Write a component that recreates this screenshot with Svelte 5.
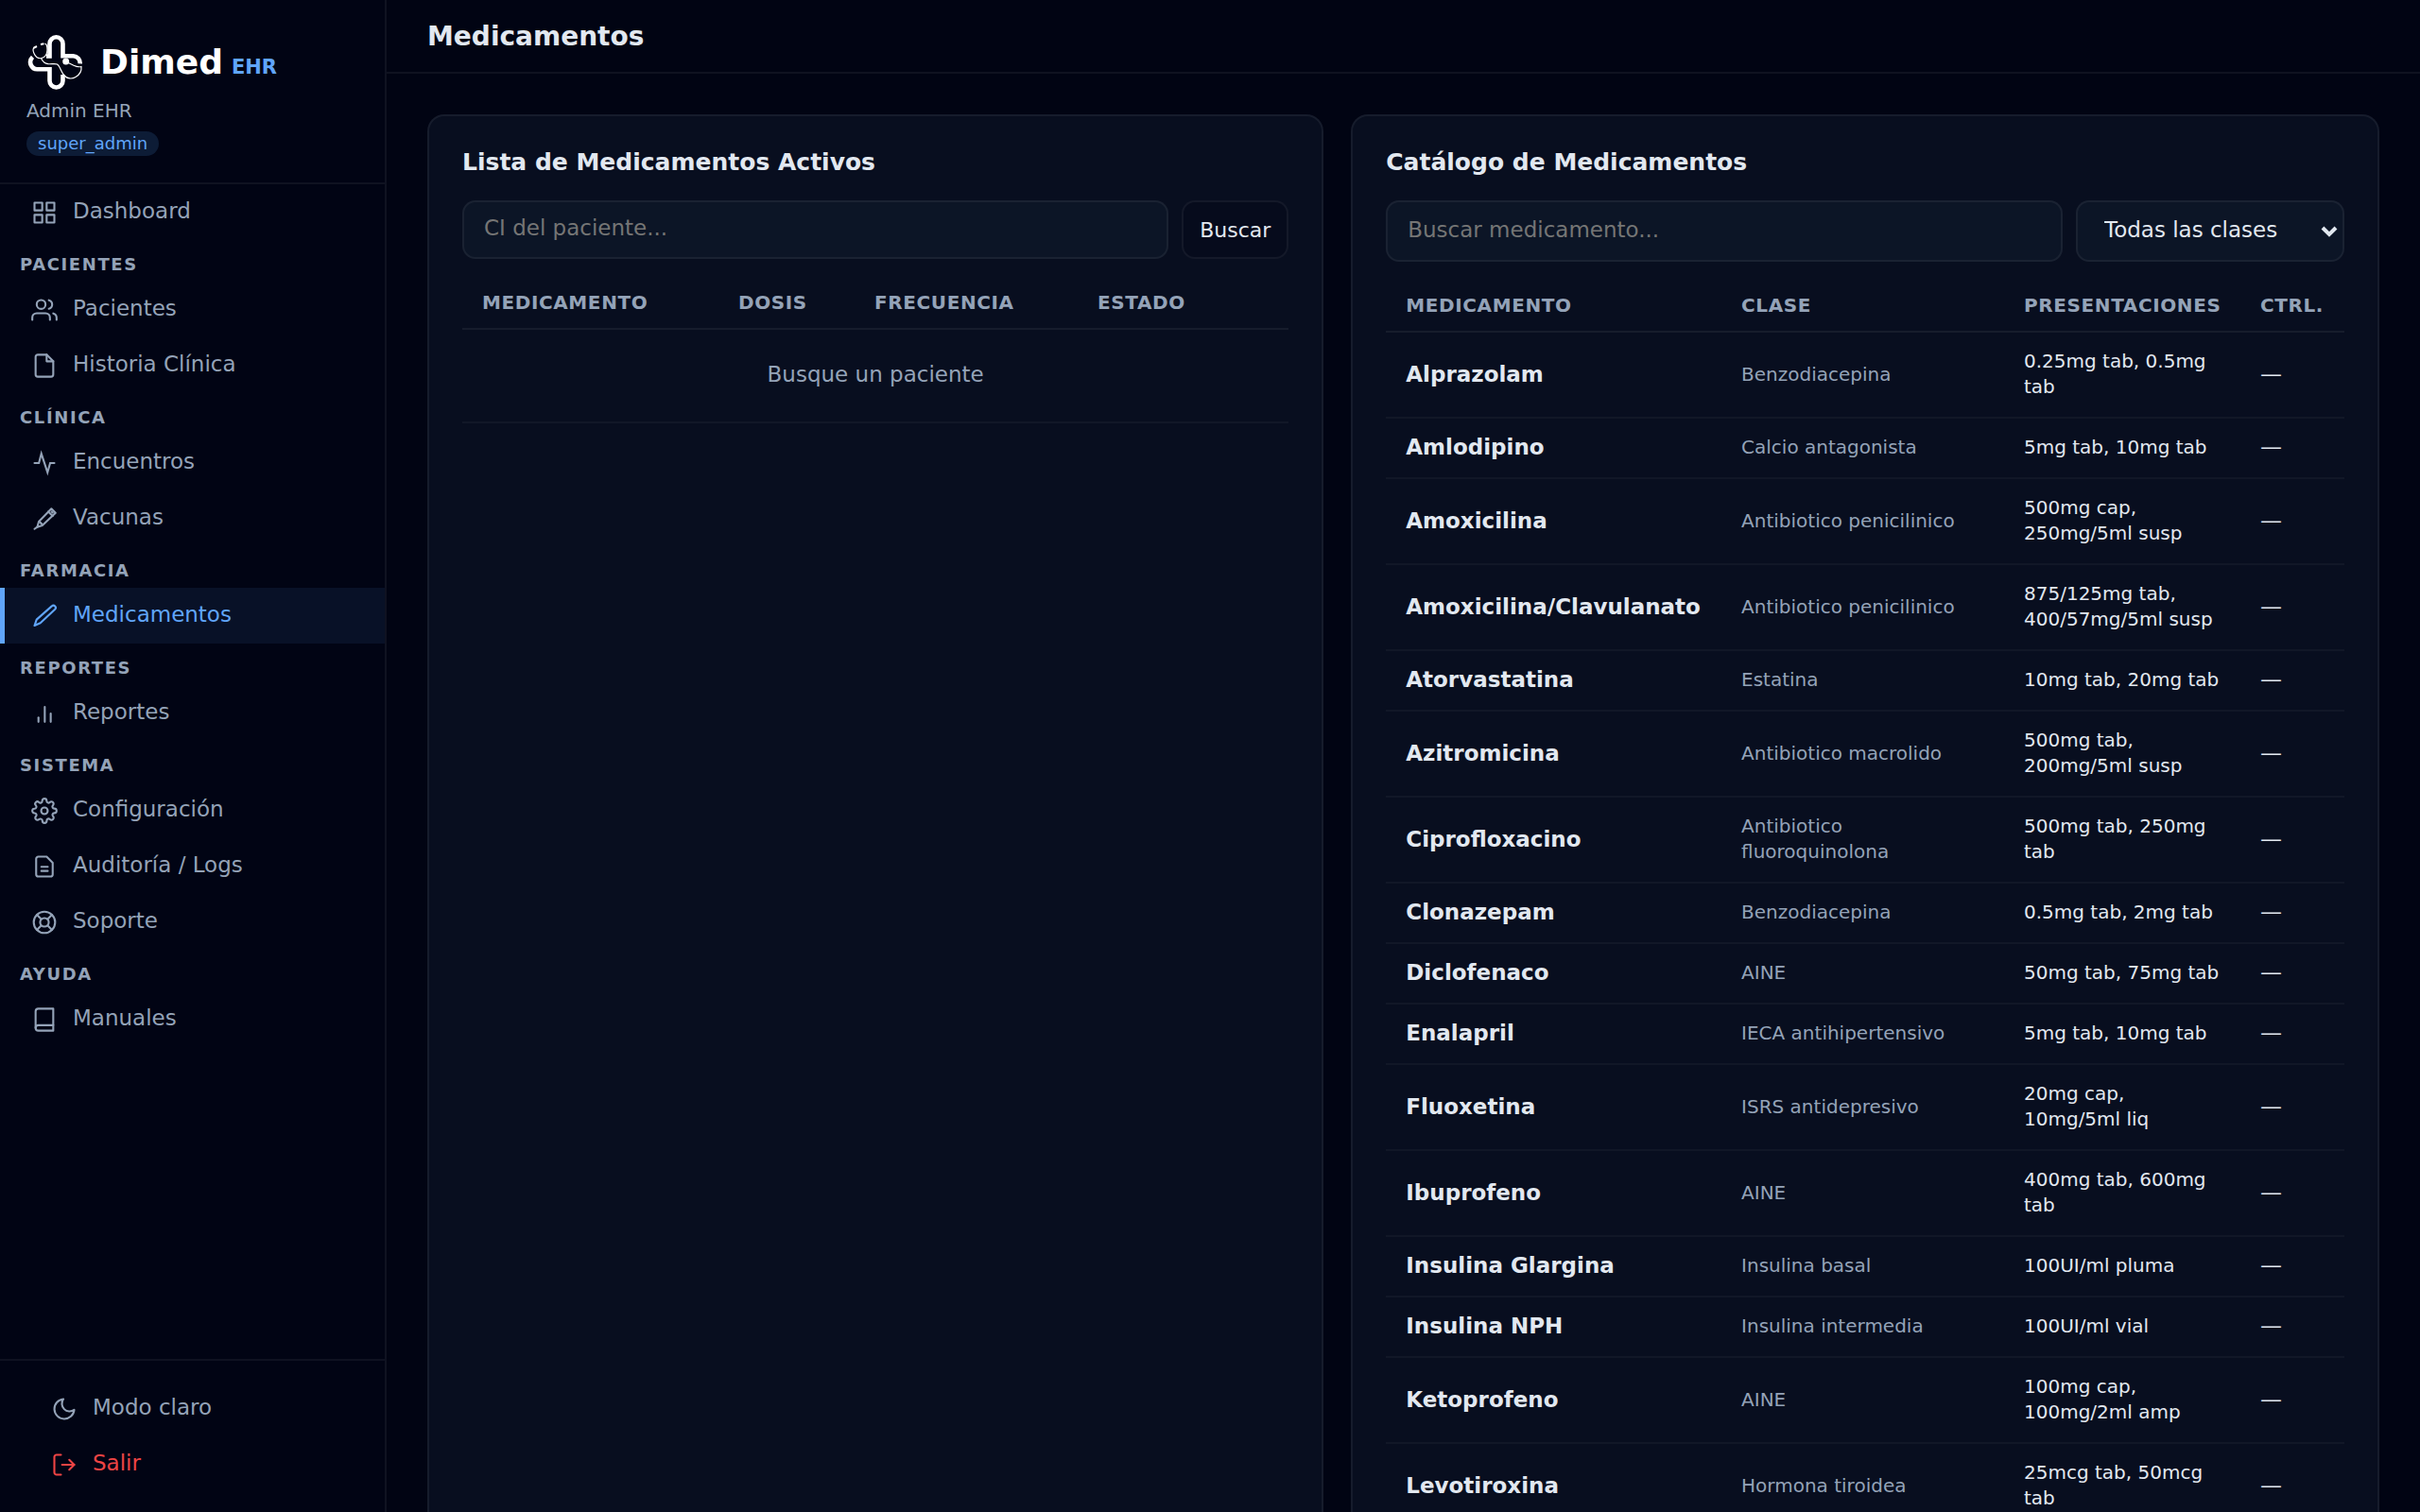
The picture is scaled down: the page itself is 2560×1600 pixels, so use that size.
<script lang="ts">
  interface NavItem {
    id: string;
    label: string;
  }

  interface NavSection {
    title: string;
    items: NavItem[];
  }

  interface Drug {
    name: string;
    clase: string;
    forms: string;
    controlled?: boolean;
  }

  const sections: NavSection[] = [
    { title: '', items: [{ id: 'dashboard', label: 'Dashboard' }] },
    {
      title: 'Pacientes',
      items: [
        { id: 'patients', label: 'Pacientes' },
        { id: 'history', label: 'Historia Clínica' },
      ],
    },
    {
      title: 'Clínica',
      items: [
        { id: 'encounters', label: 'Encuentros' },
        { id: 'vaccines', label: 'Vacunas' },
      ],
    },
    { title: 'Farmacia', items: [{ id: 'meds', label: 'Medicamentos' }] },
    { title: 'Reportes', items: [{ id: 'reports', label: 'Reportes' }] },
    {
      title: 'Sistema',
      items: [
        { id: 'settings', label: 'Configuración' },
        { id: 'audit', label: 'Auditoría / Logs' },
        { id: 'support', label: 'Soporte' },
      ],
    },
    { title: 'Ayuda', items: [{ id: 'manuals', label: 'Manuales' }] },
  ];

  const icons: Record<string, string> = {
    dashboard:
      '<rect x="3" y="3" width="7" height="7"/><rect x="14" y="3" width="7" height="7"/><rect x="14" y="14" width="7" height="7"/><rect x="3" y="14" width="7" height="7"/>',
    patients:
      '<path d="M17 21v-2a4 4 0 0 0-4-4H5a4 4 0 0 0-4 4v2"/><circle cx="9" cy="7" r="4"/><path d="M23 21v-2a4 4 0 0 0-3-3.87"/><path d="M16 3.13a4 4 0 0 1 0 7.75"/>',
    history:
      '<path d="M14 2H6a2 2 0 0 0-2 2v16a2 2 0 0 0 2 2h12a2 2 0 0 0 2-2V8z"/><path d="M14 2v6h6"/>',
    encounters: '<path stroke-linejoin="miter" d="M21 12h-3.800l-2.400 8.500L9.200 3.500 7 12H3"/>',
    vaccines:
      '<path d="M18.300 2.800l3.800 3.800-12 11.500-4.600 1.400 1.400-5z"/><path d="M15.500 5.500l4 4"/><path d="M18.500 5.500l1 1"/><path d="M7.500 14.500l2.300 2.500"/><path d="M3 21.200l2.800-2"/>',
    meds: '<path d="M18.700 2.900a1.900 1.900 0 0 1 2.900 2.900L8.300 18.200l-5.300 2.400 1.900-5.500z"/>',
    reports: '<path d="M17.700 19.600V12"/><path d="M12.300 19.600V6"/><path d="M6.600 19.600v-4"/>',
    settings:
      '<circle cx="12" cy="12" r="3"/><path d="M19.400 15a1.650 1.650 0 0 0 .33 1.820l.06.06a2 2 0 1 1-2.830 2.830l-.06-.06a1.650 1.650 0 0 0-2.800 1.170V21a2 2 0 0 1-4 0v-.09A1.650 1.650 0 0 0 9 19.400a1.650 1.650 0 0 0-1.820.33l-.06.06a2 2 0 1 1-2.830-2.830l.06-.06a1.650 1.650 0 0 0-1.170-2.800H3a2 2 0 0 1 0-4h.09A1.650 1.650 0 0 0 4.600 9a1.650 1.650 0 0 0-.33-1.820l-.06-.06a2 2 0 1 1 2.830-2.830l.06.06A1.650 1.650 0 0 0 9 4.680a1.650 1.650 0 0 0 1-1.510V3a2 2 0 0 1 4 0v.09a1.650 1.650 0 0 0 2.820 1.170l.06-.06a2 2 0 1 1 2.830 2.830l-.06.06A1.650 1.650 0 0 0 19.400 9a1.650 1.650 0 0 0 1.510 1H21a2 2 0 0 1 0 4h-.09a1.650 1.650 0 0 0-1.510 1z"/>',
    audit:
      '<path d="M14 3H6.500a2 2 0 0 0-2 2v14a2 2 0 0 0 2 2h11a2 2 0 0 0 2-2V8.500z"/><path d="M9.200 12.200h5.800"/><path d="M9.200 16h5.800"/>',
    support:
      '<circle cx="12" cy="12" r="9.700"/><circle cx="12" cy="12" r="3.900"/><path d="M5.200 5.200l4 4M14.800 14.800l4 4M14.800 9.200l4-4M5.200 18.800l4-4"/>',
    manuals:
      '<path d="M4 19.500A2.500 2.500 0 0 1 6.500 17H20"/><path d="M6.500 2H20v20H6.500A2.500 2.500 0 0 1 4 19.500v-15A2.500 2.500 0 0 1 6.500 2z"/>',
    moon: '<path d="M21 12.790A9 9 0 1 1 11.210 3 7 7 0 0 0 21 12.790z"/>',
    logout:
      '<path d="M9 21H5a2 2 0 0 1-2-2V5a2 2 0 0 1 2-2h4"/><path d="M16.500 7.500L21 12l-4.500 4.500"/><path d="M21 12H10"/>',
  };

  const drugs: Drug[] = [
    { name: 'Alprazolam', clase: 'Benzodiacepina', forms: '0.25mg tab, 0.5mg tab' },
    { name: 'Amlodipino', clase: 'Calcio antagonista', forms: '5mg tab, 10mg tab' },
    { name: 'Amoxicilina', clase: 'Antibiotico penicilinico', forms: '500mg cap, 250mg/5ml susp' },
    { name: 'Amoxicilina/Clavulanato', clase: 'Antibiotico penicilinico', forms: '875/125mg tab, 400/57mg/5ml susp' },
    { name: 'Atorvastatina', clase: 'Estatina', forms: '10mg tab, 20mg tab' },
    { name: 'Azitromicina', clase: 'Antibiotico macrolido', forms: '500mg tab, 200mg/5ml susp' },
    { name: 'Ciprofloxacino', clase: 'Antibiotico fluoroquinolona', forms: '500mg tab, 250mg tab' },
    { name: 'Clonazepam', clase: 'Benzodiacepina', forms: '0.5mg tab, 2mg tab' },
    { name: 'Diclofenaco', clase: 'AINE', forms: '50mg tab, 75mg tab' },
    { name: 'Enalapril', clase: 'IECA antihipertensivo', forms: '5mg tab, 10mg tab' },
    { name: 'Fluoxetina', clase: 'ISRS antidepresivo', forms: '20mg cap, 10mg/5ml liq' },
    { name: 'Ibuprofeno', clase: 'AINE', forms: '400mg tab, 600mg tab' },
    { name: 'Insulina Glargina', clase: 'Insulina basal', forms: '100UI/ml pluma' },
    { name: 'Insulina NPH', clase: 'Insulina intermedia', forms: '100UI/ml vial' },
    { name: 'Ketoprofeno', clase: 'AINE', forms: '100mg cap, 100mg/2ml amp' },
    { name: 'Levotiroxina', clase: 'Hormona tiroidea', forms: '25mcg tab, 50mcg tab' },
  ];

  let activeView = $state('meds');
  let patientId = $state('');
  let search = $state('');
  let clase = $state('');

  const classes = [...new Set(drugs.map((d) => d.clase))];

  const filtered = $derived(
    drugs.filter(
      (d) =>
        d.name.toLowerCase().includes(search.toLowerCase()) &&
        (clase === '' || d.clase === clase)
    )
  );
</script>

{#snippet icon(name: string)}
  <svg class="icon" viewBox="0 0 24 24" aria-hidden="true">{@html icons[name]}</svg>
{/snippet}

<div class="app">
  <aside class="sidebar">
    <div class="sidebar-header">
      <div class="brand">
        <svg class="logo" viewBox="8 8 64 64" aria-hidden="true">
          <g fill="none" stroke="#fff">
            <path
              stroke-width="4.600"
              d="M29 33.500h3.500V20.300a7 7 0 0 1 14 0V33.300H57.500a7.500 7.500 0 0 1 7.200 8M46.500 53v6.500a7 7 0 0 1-14 0V47.200H20a7.400 7.400 0 0 1-5.500-12.800"
            />
            <path
              stroke-width="1.200"
              d="M17.500 23.500c-3 .5-3 4-1.500 7 1.500 3.500 4.500 5.500 7.500 5.200 4-.5 6.500-4.500 6.500-8.700 0-4-.8-6.500-2.500-6.800M23.500 35.700c1.500 3 4 5.500 7.500 6 3.500.3 7-.8 9.500.3 3 1.800 4 8 7.500 12 3 3.300 8 4 12 1.500 4-2.300 6.500-6.500 6-11-2 .5-5 .2-8-1.200-2.500-1.300-5-2.300-8.300-4.300"
            />
            <path stroke-width="2" d="M15.500 24.800l3.500-1.800M23 21l3.500-.8" />
          </g>
          <circle cx="49.700" cy="39" r="3.500" fill="#fff" />
        </svg>
        <span class="brand-name">Dimed</span>
        <span class="brand-suffix">EHR</span>
      </div>
      <div class="user-name">Admin EHR</div>
      <span class="role">super_admin</span>
    </div>

    <nav class="nav">
      {#each sections as section (section.title)}
        {#if section.title}
          <div class="nav-title">{section.title}</div>
        {/if}
        {#each section.items as item (item.id)}
          <a
            class="nav-item"
            class:active={activeView === item.id}
            href="#{item.id}"
            onclick={() => (activeView = item.id)}
          >
            {@render icon(item.id)}
            <span>{item.label}</span>
          </a>
        {/each}
      {/each}
    </nav>

    <div class="sidebar-footer">
      <button class="nav-item">
        {@render icon('moon')}
        <span>Modo claro</span>
      </button>
      <button class="nav-item danger">
        {@render icon('logout')}
        <span>Salir</span>
      </button>
    </div>
  </aside>

  <div class="content">
    <header class="topbar">
      <h1>Medicamentos</h1>
    </header>

    <main class="panels">
      <section class="card">
        <h2>Lista de Medicamentos Activos</h2>
        <form class="filters" onsubmit={(e) => e.preventDefault()}>
          <input
            class="field"
            type="text"
            placeholder="CI del paciente..."
            aria-label="CI del paciente"
            bind:value={patientId}
          />
          <button class="btn" type="submit">Buscar</button>
        </form>
        <table class="active-table">
          <thead>
            <tr>
              <th>Medicamento</th>
              <th>Dosis</th>
              <th>Frecuencia</th>
              <th>Estado</th>
            </tr>
          </thead>
          <tbody>
            <tr>
              <td class="empty" colspan="4">Busque un paciente</td>
            </tr>
          </tbody>
        </table>
      </section>

      <section class="card">
        <h2>Catálogo de Medicamentos</h2>
        <div class="filters tall">
          <input
            class="field"
            type="text"
            placeholder="Buscar medicamento..."
            aria-label="Buscar medicamento"
            bind:value={search}
          />
          <div class="select-wrap">
            <select class="field" aria-label="Clase" bind:value={clase}>
              <option value="">Todas las clases</option>
              {#each classes as c (c)}
                <option value={c}>{c}</option>
              {/each}
            </select>
            <svg class="chevron" viewBox="0 0 18 12" aria-hidden="true">
              <path d="M2 2l7 7 7-7" />
            </svg>
          </div>
        </div>
        <table class="catalog-table">
          <thead>
            <tr>
              <th>Medicamento</th>
              <th>Clase</th>
              <th>Presentaciones</th>
              <th>Ctrl.</th>
            </tr>
          </thead>
          <tbody>
            {#each filtered as drug (drug.name)}
              <tr>
                <td class="name">{drug.name}</td>
                <td class="muted">{drug.clase}</td>
                <td>{drug.forms}</td>
                <td class="ctrl">{drug.controlled ? 'Sí' : '—'}</td>
              </tr>
            {/each}
          </tbody>
        </table>
      </section>
    </main>
  </div>
</div>

<style>
  :global(body) {
    background: #010413;
  }

  .app {
    --text: #e2e8f0;
    --muted: #94a3b8;
    --accent: #60a5fa;
    --border: rgba(255, 255, 255, 0.06);
    display: flex;
    height: 100vh;
    overflow: hidden;
    background: #010413;
    color: var(--text);
    font-family: 'DejaVu Sans', sans-serif;
    font-size: 23px;
    line-height: 27px;
  }

  .sidebar {
    box-sizing: border-box;
    flex: 0 0 409px;
    display: flex;
    flex-direction: column;
    background: #010414;
    border-right: 2px solid var(--border);
  }

  .sidebar-header {
    padding: 34px 28px 28px;
    border-bottom: 2px solid var(--border);
  }

  .brand {
    display: flex;
    align-items: baseline;
    gap: 9px;
  }

  .logo {
    width: 64px;
    height: 64px;
    margin-right: 5px;
    align-self: center;
  }

  .brand-name {
    color: #fff;
    font-size: 36px;
    font-weight: 700;
    line-height: 64px;
  }

  .brand-suffix {
    color: var(--accent);
    font-size: 21px;
    font-weight: 700;
  }

  .user-name {
    margin: 6px 0 8px;
    color: var(--muted);
    font-size: 20px;
  }

  .role {
    display: block;
    width: fit-content;
    padding: 0 12px;
    border-radius: 14px;
    background: #0d1c36;
    color: var(--accent);
    font-size: 18px;
    line-height: 26px;
  }

  .nav {
    flex: 1;
  }

  .nav-title {
    height: 44px;
    padding-left: 21px;
    color: var(--muted);
    font-size: 18px;
    font-weight: 700;
    letter-spacing: 0.09em;
    line-height: 52px;
    text-transform: uppercase;
  }

  .nav-item {
    box-sizing: border-box;
    display: flex;
    align-items: center;
    gap: 16px;
    width: 100%;
    height: 59px;
    padding: 0 28px;
    border: 0;
    border-left: 5px solid transparent;
    background: transparent;
    color: var(--muted);
    font: inherit;
    text-align: left;
    text-decoration: none;
    cursor: pointer;
  }

  .nav-item span {
    padding-bottom: 3px;
  }

  .nav-item.active {
    border-left-color: var(--accent);
    background: #081127;
    color: var(--accent);
  }

  .nav-item.danger {
    color: #ef4444;
  }

  .icon {
    flex-shrink: 0;
    width: 28px;
    height: 28px;
    fill: none;
    stroke: currentColor;
    stroke-width: 1.8;
    stroke-linecap: round;
    stroke-linejoin: round;
  }

  .sidebar-footer {
    padding: 21px;
    border-top: 2px solid var(--border);
  }

  .content {
    flex: 1;
    min-width: 0;
    overflow-y: auto;
    scrollbar-width: none;
  }

  .topbar {
    display: flex;
    align-items: center;
    height: 76px;
    padding: 0 43px;
    border-bottom: 2px solid var(--border);
  }

  h1 {
    margin: 0;
    font-size: 28px;
    font-weight: 700;
  }

  h2 {
    margin: 0 0 27px;
    font-size: 25px;
    font-weight: 700;
    line-height: 27px;
  }

  .panels {
    display: grid;
    grid-template-columns: 34fr 39fr;
    gap: 29px;
    padding: 43px;
  }

  .card {
    min-width: 0;
    padding: 35px;
    border: 2px solid var(--border);
    border-radius: 18px;
    background: #080e1f;
  }

  .filters {
    display: flex;
    gap: 14px;
    margin-bottom: 18px;
  }

  .field,
  .btn {
    box-sizing: border-box;
    height: 62px;
    border: 2px solid var(--border);
    border-radius: 14px;
    background: #0c1526;
    color: var(--text);
    font: inherit;
  }

  .tall .field {
    height: 65px;
  }

  input.field {
    flex: 1;
    min-width: 0;
    padding: 0 21px 4px;
  }

  .field::placeholder {
    color: #757575;
  }

  .select-wrap {
    position: relative;
    width: 284px;
  }

  select.field {
    width: 100%;
    padding: 0 28px 3px;
    appearance: none;
  }

  .chevron {
    position: absolute;
    top: 27px;
    right: 7px;
    width: 18px;
    height: 12px;
    fill: none;
    stroke: var(--text);
    stroke-width: 4;
    pointer-events: none;
  }

  .btn {
    padding: 0 17px;
    background: #060b1c;
    font-size: 22px;
    cursor: pointer;
  }

  table {
    width: 100%;
    table-layout: fixed;
    border-collapse: separate;
    border-spacing: 0;
  }

  th,
  td {
    box-sizing: border-box;
    padding: 17px 21px 18px;
    border-bottom: 2px solid var(--border);
    text-align: left;
    vertical-align: middle;
  }

  th {
    padding: 15px 21px 13px;
    color: var(--muted);
    font-size: 20px;
    font-weight: 700;
    letter-spacing: 0.03em;
    text-transform: uppercase;
    white-space: nowrap;
  }

  td {
    border-bottom-color: rgba(255, 255, 255, 0.04);
    font-size: 20px;
  }

  td.name {
    font-size: 23px;
    font-weight: 700;
  }

  td.muted {
    color: var(--muted);
  }

  td.ctrl {
    font-size: 23px;
  }

  td.empty {
    padding: 34px 21px 36px;
    color: var(--muted);
    font-size: 23px;
    text-align: center;
  }

  .active-table th:nth-child(1) {
    width: 31%;
  }

  .active-table th:nth-child(2) {
    width: 144px;
  }

  .active-table th:nth-child(3) {
    width: 236px;
  }

  .catalog-table th:nth-child(1) {
    width: 35%;
  }

  .catalog-table th:nth-child(3) {
    width: 250px;
  }

  .catalog-table th:nth-child(4) {
    width: 110px;
  }
</style>
